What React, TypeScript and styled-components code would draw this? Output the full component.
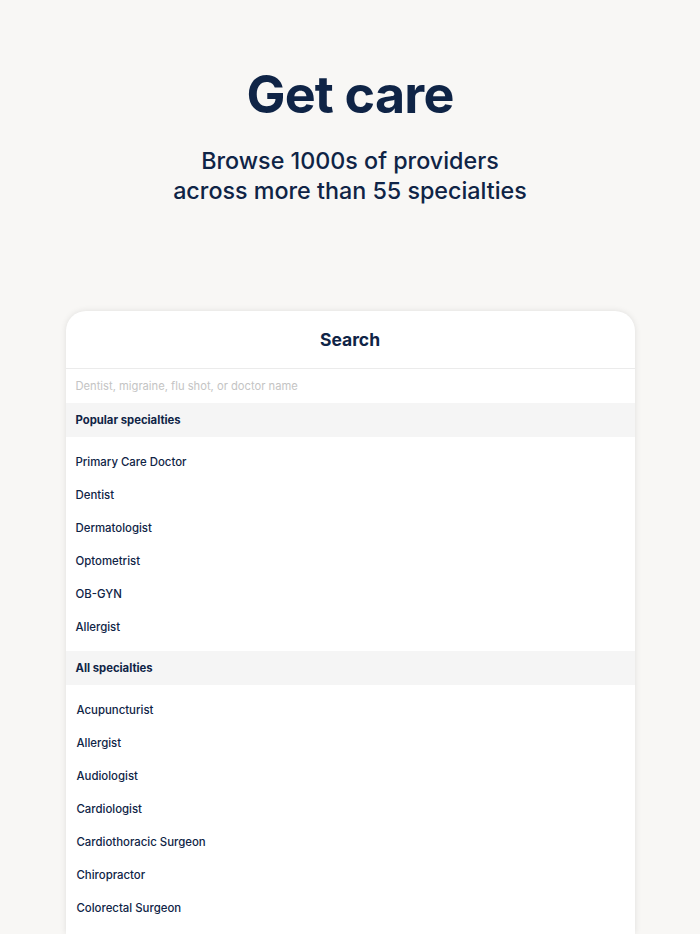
import React from "react";
import styled, { createGlobalStyle } from "styled-components";

const Global = createGlobalStyle`
  html, body { margin: 0; padding: 0; background: #f8f7f5; }
  body { font-family: Inter, "Noto Sans", sans-serif; color: #0f2446; -webkit-font-smoothing: antialiased; }
`;

const Page = styled.div`
  height: 934px;
  display: flex;
  flex-direction: column;
  align-items: center;
  overflow: hidden;
`;

const Title = styled.h1`
  margin: 66px 0 0;
  font-size: 52px;
  line-height: 58px;
  font-weight: 700;
  letter-spacing: -0.8px;
  color: #0f2446;
`;

const Subtitle = styled.p`
  margin: 22px 0 0;
  font-size: 23.3px;
  line-height: 30px;
  font-weight: 500;
  text-align: center;
  color: #0f2446;
`;

const Card = styled.div`
  flex: 1 0 auto;
  margin-top: 105px;
  width: 569px;
  background: #fff;
  border-radius: 20px 20px 0 0;
  box-shadow: 0 0 6px rgba(0, 0, 0, 0.1);
  overflow: hidden;
`;

const CardHeader = styled.div`
  height: 57px;
  display: flex;
  align-items: center;
  justify-content: center;
  font-size: 17.5px;
  font-weight: 700;
  border-bottom: 1px solid #ebebeb;
`;

const SearchRow = styled.div`
  height: 34px;
  display: flex;
  align-items: center;
  padding: 0 10px;
  font-size: 11.2px;
  color: #c4c4c4;
`;

const SectionHeader = styled.div`
  height: 34px;
  display: flex;
  align-items: center;
  padding: 0 10px;
  background: #f5f5f5;
  font-size: 11.3px;
  font-weight: 700;
`;

const List = styled.ul`
  list-style: none;
  margin: 0;
  padding: 8px 0;
`;

const Item = styled.li<{ $indent?: number }>`
  height: 33px;
  display: flex;
  align-items: center;
  padding-left: ${(p) => 10 + (p.$indent ?? 0)}px;
  font-size: 11.4px;
  font-weight: 500;
`;

const popular = ["Primary Care Doctor", "Dentist", "Dermatologist", "Optometrist", "OB-GYN", "Allergist"];
const all = [
  "Acupuncturist",
  "Allergist",
  "Audiologist",
  "Cardiologist",
  "Cardiothoracic Surgeon",
  "Chiropractor",
  "Colorectal Surgeon",
];

export default function App() {
  return (
    <>
      <Global />
      <Page>
        <Title>Get care</Title>
        <Subtitle>
          Browse 1000s of providers
          <br />
          across more than 55 specialties
        </Subtitle>
        <Card>
          <CardHeader>Search</CardHeader>
          <SearchRow>Dentist, migraine, flu shot, or doctor name</SearchRow>
          <SectionHeader>Popular specialties</SectionHeader>
          <List>
            {popular.map((p) => (
              <Item key={p}>{p}</Item>
            ))}
          </List>
          <SectionHeader>All specialties</SectionHeader>
          <List>
            {all.map((p) => (
              <Item key={p} $indent={1}>{p}</Item>
            ))}
          </List>
        </Card>
      </Page>
    </>
  );
}
